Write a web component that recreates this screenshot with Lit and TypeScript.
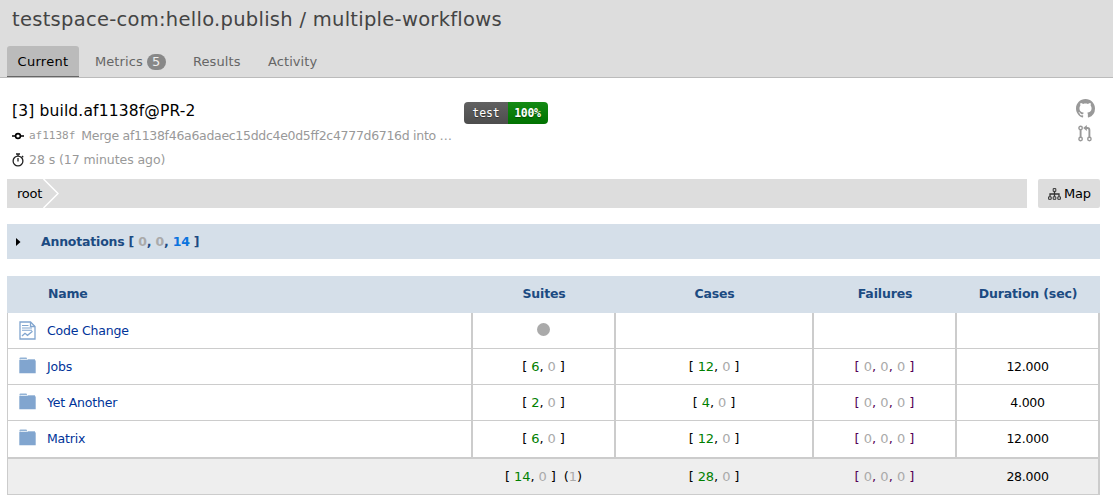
import { LitElement, html, css, svg } from "lit";
import { customElement } from "lit/decorators.js";

interface Row {
  icon: "report" | "folder";
  name: string;
  suites: number[] | null;
  cases: number[];
  failures: number[];
  duration: string;
}

const ROWS: Row[] = [
  { icon: "report", name: "Code Change", suites: null, cases: [], failures: [], duration: "" },
  { icon: "folder", name: "Jobs", suites: [6, 0], cases: [12, 0], failures: [0, 0, 0], duration: "12.000" },
  { icon: "folder", name: "Yet Another", suites: [2, 0], cases: [4, 0], failures: [0, 0, 0], duration: "4.000" },
  { icon: "folder", name: "Matrix", suites: [6, 0], cases: [12, 0], failures: [0, 0, 0], duration: "12.000" },
];

const counts = (values: number[]) =>
  values.length
    ? html`[ ${values.map(
        (v, i) => html`${i ? ", " : ""}<span class=${v ? "good" : "zero"}>${v}</span>`
      )} ]`
    : "";

const folderIcon = svg`<svg class="rowicon" width="17" height="17" viewBox="0 0 17 17">
  <path d="M0.5 1.5Q0.5 0.5 1.5 0.5H7Q8 0.5 8 1.5V2.5H0.5Z" fill="#93b3d6"/>
  <path d="M2 2.5H7.5" stroke="#dde8f3" stroke-width="1"/>
  <path d="M0.3 3H15.5Q16.7 3 16.7 4V16.2H0.3Z" fill="#81a5cf"/>
  <path d="M8.5 2.5H16" stroke="#a9c2de" stroke-width="1"/></svg>`;

const reportIcon = svg`<svg class="rowicon" width="17" height="19" viewBox="0 0 17 19" fill="none" stroke="#81a5cf">
  <path d="M1 1H11.5L16 5.5V18H1Z" stroke-width="1.3"/>
  <path d="M11.5 1V5.5H16" stroke-width="1.3"/>
  <path d="M3 4.5H9.5M3 7H13M3 9.2H13" stroke-width="1.1"/>
  <path d="M3 15L6 12.3L8.5 14.3L13.5 10.3" stroke-width="1.3"/></svg>`;

@customElement("app-root")
export class AppRoot extends LitElement {
  static styles = css`
    :host {
      display: block;
      height: 501px;
      overflow: hidden;
      background: #fff;
      color: #000;
      font: 13px/18px "DejaVu Sans", Verdana, sans-serif;
      letter-spacing: -0.1px;
      white-space: nowrap;
    }
    * { box-sizing: border-box; }
    svg { display: block; flex: none; }
    .top {
      display: flex;
      flex-direction: column;
      justify-content: space-between;
      height: 78px;
      background: #ddd;
      border-bottom: 1px solid #bbb;
    }
    .title { padding: 8px 0 0 12px; font-size: 19.5px; line-height: 24px; color: #444; letter-spacing: 0.28px; }
    .tabs { display: flex; padding-left: 7px; height: 31px; color: #666; line-height: 31px; letter-spacing: 0.08px; }
    .tab { display: flex; align-items: center; }
    .tab.on { width: 72px; justify-content: center; background: #bbb; color: #000; border-bottom: 1px solid #666; border-radius: 3px 3px 0 0; letter-spacing: 0.28px; }
    .metrics { margin-left: 16px; width: 98px; }
    .results { width: 75px; }
    .pill { margin-left: 4px; width: 19px; height: 16px; border-radius: 8px; background: #888; color: #eee; line-height: 16px; text-align: center; }
    .info { display: flex; height: 101px; padding-left: 12px; }
    .build { width: 452px; padding-top: 22px; }
    .name { font-size: 15.5px; line-height: 22px; margin-bottom: 2px; letter-spacing: 0.15px; }
    .line { display: flex; align-items: center; height: 24px; color: #999; }
    .line svg { margin-right: 5px; }
    .hash { font-family: "DejaVu Sans Mono", monospace; font-size: 11px; margin-right: 6px; letter-spacing: 0; }
    .merge { font-size: 12.5px; letter-spacing: -0.3px; }
    .time { font-size: 12.5px; letter-spacing: -0.07px; }
    .badge {
      display: flex;
      margin-top: 24px;
      width: 84px;
      height: 22px;
      border-radius: 4px;
      overflow: hidden;
      color: #fff;
      font: 11.5px/22px "DejaVu Sans Mono", monospace;
      text-align: center;
      text-shadow: 0 1px 1px #0006;
    }
    .label { width: 44px; background: linear-gradient(#616161, #4d4d4d); }
    .score { width: 40px; background: linear-gradient(#148a14, #007200); font-weight: bold; letter-spacing: -0.3px; padding-right: 1px; }
    .links { margin-left: auto; width: 37px; padding-top: 21px; }
    .links svg + svg { margin: 7px 0 0 2px; }
    .crumbs { display: flex; gap: 11px; padding-left: 7px; height: 29px; line-height: 29px; letter-spacing: -0.25px; }
    .path { display: flex; width: 1020px; background: #ddd; padding-left: 10px; }
    .map { display: flex; align-items: center; width: 62px; background: #ddd; border-radius: 2px; padding-left: 10px; }
    .map svg { margin-right: 3px; }
    .notes {
      display: flex;
      align-items: center;
      margin: 16px 0 17px 7px;
      width: 1093px;
      height: 35px;
      padding-left: 9px;
      background: #d5dfe9;
      color: #1c4b82;
      font-size: 12.5px;
      letter-spacing: -0.2px;
      font-weight: bold;
    }
    .notes svg { margin-right: 20px; }
    .zero { color: #aaa; }
    .good { color: #008000; }
    .blue { color: #0b74de; }
    .grid { margin-left: 7px; width: 1093px; }
    .row { display: grid; grid-template-columns: 465px 143px 198px 143px 143px; height: 36px; border-left: 1px solid #ccc; }
    .row > div { display: flex; align-items: center; justify-content: center; border-right: 2px solid #ccc; border-bottom: 1px solid #ccc; white-space: pre; }
    .row > div:first-child { justify-content: flex-start; padding-left: 11px; color: #003399; font-size: 12.5px; letter-spacing: -0.2px; }
    .row.head { height: 37px; background: #d5dfe9; border-color: #d5dfe9; color: #1c4b82; font-weight: bold; font-size: 12.5px; letter-spacing: -0.15px; }
    .row.head > div { border: 0; padding-right: 1px; padding-bottom: 2px; }
    .row.head > div:first-child { color: inherit; padding-left: 40px; }
    .row.last { height: 38px; }
    .row.last > div { border-bottom-width: 2px; padding-bottom: 1px; }
    .row.sum { background: #eee; }
    .row.sum > div { border-right: 0; padding-right: 2px; }
    .row.sum > div:last-child { border-right: 2px solid #ccc; padding-right: 0; }
    .rowicon { width: 17px; margin-right: 11px; }
    .folder .rowicon { margin-top: -2px; }
    .report .rowicon { margin-top: -1px; }
    .dot { width: 13px; height: 13px; border-radius: 50%; background: #aaa; margin-top: -3px; }
    .fail { color: #505; letter-spacing: 0; }
    .secs { font-size: 12.5px; letter-spacing: -0.25px; }
  `;

  render() {
    return html`
      <div class="top">
        <div class="title">testspace-com:hello.publish / multiple-workflows</div>
        <div class="tabs">
          <div class="tab on">Current</div>
          <div class="tab metrics">Metrics<span class="pill">5</span></div>
          <div class="tab results">Results</div>
          <div class="tab">Activity</div>
        </div>
      </div>
      <div class="info">
        <div class="build">
          <div class="name">[3] build.af1138f@PR-2</div>
          <div class="line">
            <svg width="12" height="12" viewBox="0 0 12 12" fill="none" stroke="#000" stroke-width="1.6"><circle cx="6" cy="6" r="2.4"/><path d="M0 6H3.5M8.5 6H12"/></svg>
            <span class="hash">af1138f</span><span class="merge">Merge af1138f46a6adaec15ddc4e0d5ff2c4777d6716d into …</span>
          </div>
          <div class="line">
            <svg width="12" height="14" viewBox="0 0 12 14" fill="none" stroke="#222"><circle cx="6" cy="8" r="4.9" stroke-width="1.3"/><path d="M4 1H8M6 1V3M6 5V8.5M10 3L11.2 4.2" stroke-width="1.3"/></svg>
            <span class="time">28 s (17 minutes ago)</span>
          </div>
        </div>
        <div class="badge"><div class="label">test</div><div class="score">100%</div></div>
        <div class="links">
          <svg width="19" height="19" viewBox="0 0 16 16" fill="#999"><path d="M8 0C3.58 0 0 3.58 0 8c0 3.54 2.29 6.53 5.47 7.59.4.07.55-.17.55-.38 0-.19-.01-.82-.01-1.49-2.01.37-2.53-.49-2.69-.94-.09-.23-.48-.94-.82-1.13-.28-.15-.68-.52-.01-.53.63-.01 1.08.58 1.23.82.72 1.21 1.87.87 2.33.66.07-.52.28-.87.51-1.07-1.78-.2-3.64-.89-3.64-3.95 0-.87.31-1.59.82-2.15-.08-.2-.36-1.02.08-2.12 0 0 .67-.21 2.2.82.64-.18 1.32-.27 2-.27s1.36.09 2 .27c1.53-1.04 2.2-.82 2.2-.82.44 1.1.16 1.92.08 2.12.51.56.82 1.27.82 2.15 0 3.07-1.87 3.75-3.65 3.95.29.25.54.73.54 1.48 0 1.07-.01 1.93-.01 2.2 0 .21.15.46.55.38A8.01 8.01 0 0 0 16 8c0-4.42-3.58-8-8-8z"/></svg>
          <svg width="14" height="17" viewBox="0 0 14 17" fill="none" stroke="#999" stroke-width="1.4"><circle cx="2.6" cy="3" r="1.7"/><circle cx="2.6" cy="14" r="1.7"/><circle cx="11.4" cy="14" r="1.7"/><path d="M2.6 4.7V12.3M11.4 12.3V5Q11.4 3 9.4 3H7" stroke-width="1.9"/><path d="M8.8 0V6L5.2 3Z" fill="#999" stroke="none"/></svg>
        </div>
      </div>
      <div class="crumbs">
        <div class="path"><span class="root">root</span><svg width="17" height="29" viewBox="0 0 17 29" fill="none" stroke="#fff" stroke-width="1.5"><path d="M1.5 0L16 14.5L1.5 29"/></svg></div>
        <div class="map"><svg width="13" height="12" viewBox="0 0 13 12" fill="none" stroke="#333"><path d="M5.2 0.6H7.8V3.4H5.2Z"/><path d="M6.5 3.5V8.5M2 8.5V6H11V8.5" stroke-width="1.3"/><path d="M0.6 8.8H3.2V11.3H0.6ZM5.2 8.8H7.8V11.3H5.2ZM9.8 8.8H12.4V11.3H9.8Z"/></svg><span>Map</span></div>
      </div>
      <div class="notes">
        <svg width="5" height="8" viewBox="0 0 5 8"><path d="M0 0L4.5 4L0 8Z"/></svg>
        <span>Annotations [ <span class="zero">0</span>, <span class="zero">0</span>, <span class="blue">14</span> ]</span>
      </div>
      <div class="grid">
        <div class="row head"><div>Name</div><div>Suites</div><div>Cases</div><div>Failures</div><div>Duration (sec)</div></div>
        ${ROWS.map(
          (r, i) => html`<div class="row ${i === ROWS.length - 1 ? "last" : ""}">
            <div class=${r.icon}>${r.icon === "folder" ? folderIcon : reportIcon}<span>${r.name}</span></div>
            <div>${r.suites ? html`<span>${counts(r.suites)}</span>` : html`<span class="dot"></span>`}</div>
            <div><span>${counts(r.cases)}</span></div>
            <div><span class="fail">${counts(r.failures)}</span></div>
            <div><span class="secs">${r.duration}</span></div>
          </div>`
        )}
        <div class="row sum">
          <div></div>
          <div><span>${counts([14, 0])}  (<span class="zero">1</span>)</span></div>
          <div><span>${counts([28, 0])}</span></div>
          <div><span class="fail">${counts([0, 0, 0])}</span></div>
          <div><span class="secs">28.000</span></div>
        </div>
      </div>
    `;
  }
}
